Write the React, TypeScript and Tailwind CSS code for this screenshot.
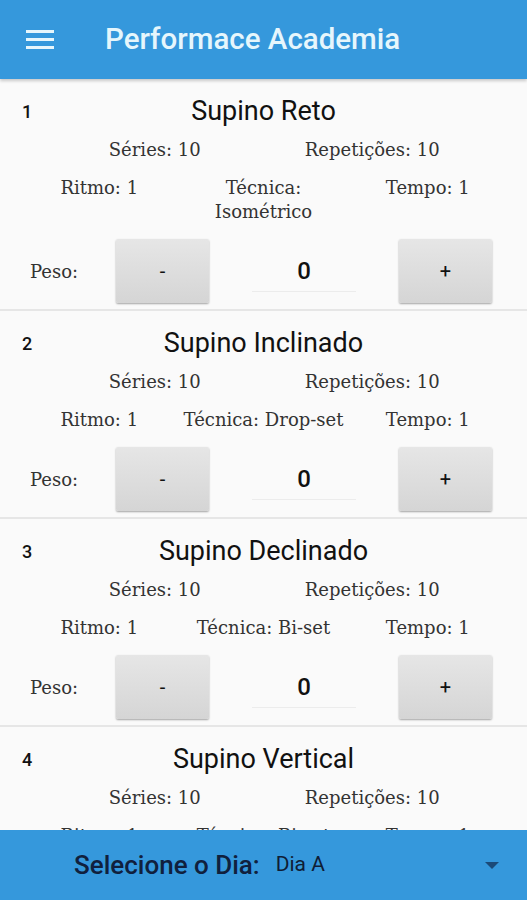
type Exercise = {
  id: number;
  name: string;
  series: number;
  reps: number;
  rhythm: number;
  technique: string;
  time: number;
  weight: number;
};

const exercises: Exercise[] = [
  { id: 1, name: "Supino Reto", series: 10, reps: 10, rhythm: 1, technique: "Isométrico", time: 1, weight: 0 },
  { id: 2, name: "Supino Inclinado", series: 10, reps: 10, rhythm: 1, technique: "Drop-set", time: 1, weight: 0 },
  { id: 3, name: "Supino Declinado", series: 10, reps: 10, rhythm: 1, technique: "Bi-set", time: 1, weight: 0 },
  { id: 4, name: "Supino Vertical", series: 10, reps: 10, rhythm: 1, technique: "Bi-set", time: 1, weight: 0 },
];

const sans = "font-['Roboto',_'Liberation_Sans',_sans-serif]";
const serif = "font-['DejaVu_Serif',_'Liberation_Serif',_serif]";

function StepButton({ label }: { label: string }) {
  return (
    <button
      className={`w-[93px] h-[64px] rounded-[2px] bg-gradient-to-b from-[#e6e6e6] to-[#d5d5d5] shadow-[0_1px_2px_rgba(0,0,0,0.35)] text-[20px] text-[#111] ${sans}`}
    >
      {label}
    </button>
  );
}

function ExerciseCard({ ex }: { ex: Exercise }) {
  return (
    <div className="bg-[#fafafa] pt-[12px] pb-[6px] border-b-2 border-[#e6e6e6]">
      <div className="grid grid-cols-[46px_1fr_46px] items-center h-[34px]">
        <span className={`pl-[22px] text-[18px] font-medium text-[#111] ${sans}`}>{ex.id}</span>
        <h2 className={`text-center text-[27px] text-[#111] ${sans}`}>{ex.name}</h2>
        <span />
      </div>

      <div className={`mt-[12px] grid grid-cols-2 px-[46px] text-[18px] leading-[25px] text-[#333] ${serif}`}>
        <span className="text-center">Séries: {ex.series}</span>
        <span className="text-center">Repetições: {ex.reps}</span>
      </div>

      <div
        className={`mt-[14px] grid grid-cols-[1fr_168px_1fr] px-[19px] text-[18px] leading-[24px] text-[#333] ${serif}`}
      >
        <span className="text-center">Ritmo: {ex.rhythm}</span>
        <span className="text-center">Técnica: {ex.technique}</span>
        <span className="text-center">Tempo: {ex.time}</span>
      </div>

      <div className="mt-[15px] flex items-center pl-[30px] pr-[35px]">
        <span className={`w-[86px] text-[18px] text-[#333] ${serif}`}>Peso:</span>
        <StepButton label="-" />
        <div className="flex-1 flex justify-center">
          <span
            className={`w-[104px] text-center text-[24px] font-medium text-[#111] leading-[40px] border-b border-[#ececec] ${sans}`}
          >
            {ex.weight}
          </span>
        </div>
        <StepButton label="+" />
      </div>
    </div>
  );
}

export default function App() {
  return (
    <div className="w-[527px] h-[900px] overflow-hidden bg-[#fafafa] relative">
      <header className="h-[79px] bg-[#3598dc] flex items-center shadow-[0_2px_3px_rgba(0,0,0,0.2)] relative z-10">
        <svg width="28" height="20" viewBox="0 0 28 20" className="ml-[26px]">
          <rect x="0" y="0" width="28" height="3" fill="#e6f6fc" />
          <rect x="0" y="8" width="28" height="3" fill="#e6f6fc" />
          <rect x="0" y="16" width="28" height="3" fill="#e6f6fc" />
        </svg>
        <h1 className={`ml-[51px] text-[29.5px] font-medium text-[#e6f6fc] ${sans}`}>Performace Academia</h1>
      </header>

      <main>
        {exercises.map((ex) => (
          <ExerciseCard key={ex.id} ex={ex} />
        ))}
      </main>

      <footer className="absolute bottom-0 left-0 right-0 h-[70px] bg-[#3598dc] flex items-center">
        <span className={`ml-[74px] text-[26px] font-medium text-[#10203d] ${sans}`}>Selecione o Dia:</span>
        <span className={`ml-[16px] text-[21px] text-[#0f1d35] ${sans}`}>Dia A</span>
        <svg width="14" height="7" viewBox="0 0 14 7" className="ml-auto mr-[28px]">
          <path d="M0 0 L14 0 L7 7 Z" fill="#1b4a78" />
        </svg>
      </footer>
    </div>
  );
}
